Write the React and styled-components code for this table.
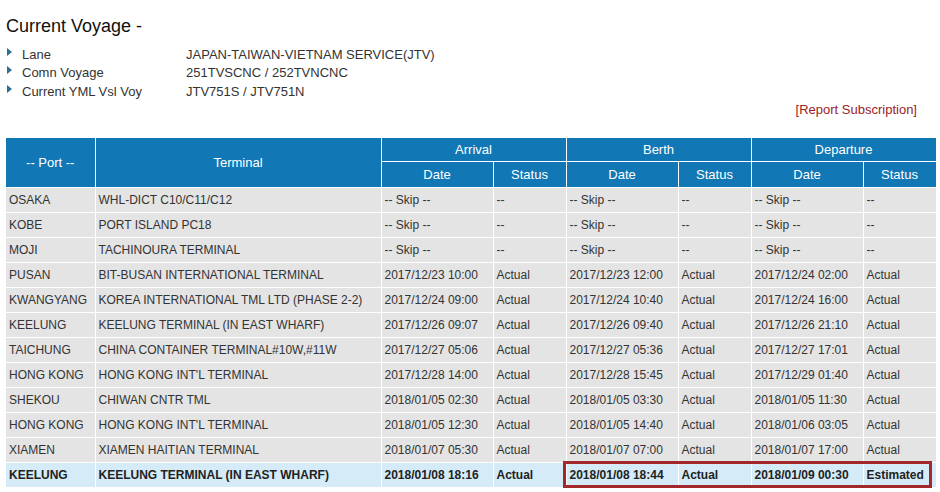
import React from "react";
import styled, { createGlobalStyle } from "styled-components";

const Global = createGlobalStyle`
  html, body { margin: 0; padding: 0; background: #fff; }
  body { font-family: "Liberation Sans", Arial, sans-serif; color: #333; }
`;

const Page = styled.div`
  width: 940px;
  height: 492px;
  overflow: hidden;
  padding: 15px 0 0 6px;
  box-sizing: border-box;
`;

const Title = styled.h1`
  margin: 0 0 8px 0;
  font-size: 18px;
  font-weight: normal;
  color: #111;
  line-height: 22px;
`;

const InfoList = styled.div`
  display: flex;
  flex-direction: column;
`;

const InfoRow = styled.div`
  display: grid;
  grid-template-columns: 16px 164px auto;
  height: 18.5px;
  align-items: center;
  font-size: 13px;
  color: #333;
`;

const Bullet = styled.span`
  width: 0;
  height: 0;
  border-top: 4px solid transparent;
  border-bottom: 4px solid transparent;
  border-left: 5px solid #2b6f93;
  margin-left: 1px;
  margin-top: -5px;
`;

const LinkRow = styled.div`
  display: flex;
  justify-content: flex-end;
  padding-right: 23px;
  margin-top: 0px;
  height: 18px;
  align-items: center;
`;

const Report = styled.a`
  color: #9b2226;
  font-size: 13px;
  text-decoration: none;
`;

const TableWrap = styled.div`
  position: relative;
  width: 930px;
  margin-top: 19px;
`;

const Table = styled.table`
  width: 930px;
  table-layout: fixed;
  border-collapse: collapse;
  font-size: 12px;
`;

const Th = styled.th`
  background: #1177b5;
  color: #fff;
  font-weight: normal;
  font-size: 13px;
  border: 1px solid #fff;
  border-top: none;
  height: ${(p) => p.$h || 24}px;
  padding: 0;
  text-align: center;
  &:first-child { border-left: none; }
`;

const Td = styled.td`
  background: ${(p) => (p.$hl ? "#d5ecf8" : "#e4e4e4")};
  font-weight: ${(p) => (p.$hl ? "bold" : "normal")};
  color: ${(p) => (p.$hl ? "#222" : "#333")};
  border: 1px solid #fff;
  height: 24px;
  padding: 0 0 0 3px;
  white-space: nowrap;
  overflow: hidden;
  &:first-child { border-left: none; }
`;

const RedBox = styled.div`
  position: absolute;
  left: 557px;
  top: 323px;
  width: 369px;
  height: 27px;
  border: 3px solid #a3282b;
  box-sizing: border-box;
  pointer-events: none;
`;

const info = [
  ["Lane", "JAPAN-TAIWAN-VIETNAM SERVICE(JTV)"],
  ["Comn Voyage", "251TVSCNC / 252TVNCNC"],
  ["Current YML Vsl Voy", "JTV751S / JTV751N"],
];

const rows = [
  ["OSAKA", "WHL-DICT C10/C11/C12", "-- Skip --", "--", "-- Skip --", "--", "-- Skip --", "--"],
  ["KOBE", "PORT ISLAND PC18", "-- Skip --", "--", "-- Skip --", "--", "-- Skip --", "--"],
  ["MOJI", "TACHINOURA TERMINAL", "-- Skip --", "--", "-- Skip --", "--", "-- Skip --", "--"],
  ["PUSAN", "BIT-BUSAN INTERNATIONAL TERMINAL", "2017/12/23 10:00", "Actual", "2017/12/23 12:00", "Actual", "2017/12/24 02:00", "Actual"],
  ["KWANGYANG", "KOREA INTERNATIONAL TML LTD (PHASE 2-2)", "2017/12/24 09:00", "Actual", "2017/12/24 10:40", "Actual", "2017/12/24 16:00", "Actual"],
  ["KEELUNG", "KEELUNG TERMINAL (IN EAST WHARF)", "2017/12/26 09:07", "Actual", "2017/12/26 09:40", "Actual", "2017/12/26 21:10", "Actual"],
  ["TAICHUNG", "CHINA CONTAINER TERMINAL#10W,#11W", "2017/12/27 05:06", "Actual", "2017/12/27 05:36", "Actual", "2017/12/27 17:01", "Actual"],
  ["HONG KONG", "HONG KONG INT'L TERMINAL", "2017/12/28 14:00", "Actual", "2017/12/28 15:45", "Actual", "2017/12/29 01:40", "Actual"],
  ["SHEKOU", "CHIWAN CNTR TML", "2018/01/05 02:30", "Actual", "2018/01/05 03:30", "Actual", "2018/01/05 11:30", "Actual"],
  ["HONG KONG", "HONG KONG INT'L TERMINAL", "2018/01/05 12:30", "Actual", "2018/01/05 14:40", "Actual", "2018/01/06 03:05", "Actual"],
  ["XIAMEN", "XIAMEN HAITIAN TERMINAL", "2018/01/07 05:30", "Actual", "2018/01/07 07:00", "Actual", "2018/01/07 17:00", "Actual"],
  ["KEELUNG", "KEELUNG TERMINAL (IN EAST WHARF)", "2018/01/08 18:16", "Actual", "2018/01/08 18:44", "Actual", "2018/01/09 00:30", "Estimated"],
];

const widths = [89, 286, 112, 73, 112, 73, 112, 73];

export default function App() {
  return (
    <Page>
      <Global />
      <Title>Current Voyage -</Title>
      <InfoList>
        {info.map(([k, v]) => (
          <InfoRow key={k}>
            <Bullet />
            <span>{k}</span>
            <span>{v}</span>
          </InfoRow>
        ))}
      </InfoList>
      <LinkRow>
        <Report href="#">[Report Subscription]</Report>
      </LinkRow>
      <TableWrap>
        <Table>
          <colgroup>
            {widths.map((w, i) => (
              <col key={i} style={{ width: w }} />
            ))}
          </colgroup>
          <thead>
            <tr>
              <Th rowSpan={2}>-- Port --</Th>
              <Th rowSpan={2}>Terminal</Th>
              <Th colSpan={2} $h={23}>Arrival</Th>
              <Th colSpan={2} $h={23}>Berth</Th>
              <Th colSpan={2} $h={23}>Departure</Th>
            </tr>
            <tr>
              <Th $h={25}>Date</Th>
              <Th $h={25}>Status</Th>
              <Th $h={25}>Date</Th>
              <Th $h={25}>Status</Th>
              <Th $h={25}>Date</Th>
              <Th $h={25}>Status</Th>
            </tr>
          </thead>
          <tbody>
            {rows.map((r, i) => {
              const hl = i === rows.length - 1;
              return (
                <tr key={i}>
                  {r.map((c, j) => (
                    <Td key={j} $hl={hl}>
                      {c}
                    </Td>
                  ))}
                </tr>
              );
            })}
          </tbody>
        </Table>
        <RedBox />
      </TableWrap>
    </Page>
  );
}
